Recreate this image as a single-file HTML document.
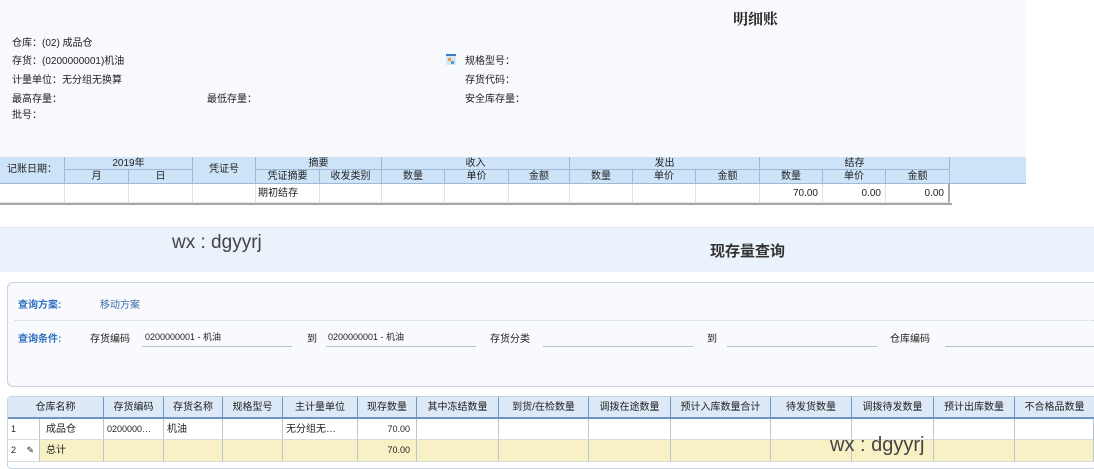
<!DOCTYPE html>
<html><head><meta charset="utf-8"><style>
*{margin:0;padding:0;box-sizing:border-box}
body{width:1094px;height:469px;overflow:hidden;background:#fff;font-family:"Liberation Sans","Noto Sans CJK SC",sans-serif;font-size:10px;color:#222;position:relative}
.a{position:absolute;white-space:nowrap}
.top{position:absolute;left:0;top:0;width:1026px;height:157px;background:#f8f9fd}
.c{position:absolute;border-right:1px solid #9fb8d6;border-bottom:1px solid #9fb8d6;text-align:center;font-size:10px;line-height:13px;overflow:hidden;white-space:nowrap}
.h{background:#cde3f8}
.d{background:#fff;border-right:1px solid #dde3ea;border-bottom:1px solid #dde3ea;text-align:right;padding-right:4px;line-height:19px}
.g{position:absolute;overflow:hidden;white-space:nowrap;font-size:10px;border-right:1px solid #b8c6d6;border-bottom:1px solid #d8dde4;line-height:21px}
.gh{background:#dde9f7;text-align:center;border-right:1px solid #6f95c4;border-bottom:2px solid #6f95c4}
.r1{background:#fff}
.r2{background:#f8f1c6}
.ul{position:absolute;height:1px;background:#b8c0ca}
</style></head><body>
<div class="top"></div>
<div class="a" style="left:733px;top:8px;font-size:15px;font-weight:bold;font-family:'Noto Serif CJK SC',serif">明细账</div>
<div class="a" style="left:12px;top:34px">仓库：(02) 成品仓</div>
<div class="a" style="left:12px;top:52px">存货：(0200000001)机油</div>
<div class="a" style="left:12px;top:71px">计量单位：无分组无换算</div>
<div class="a" style="left:12px;top:90px">最高存量：</div>
<div class="a" style="left:207px;top:90px">最低存量：</div>
<div class="a" style="left:12px;top:106px">批号：</div>
<div class="a" style="left:446px;top:54px;width:10px;height:11px;background:#d9e6f6;border-top:2px solid #3a78c8"><div style="position:absolute;left:2px;top:2px;width:3px;height:3px;background:#e8a040"></div><div style="position:absolute;left:5px;top:5px;width:3px;height:3px;background:#4aa0d0"></div></div>
<div class="a" style="left:465px;top:52px">规格型号：</div>
<div class="a" style="left:465px;top:71px">存货代码：</div>
<div class="a" style="left:465px;top:90px">安全库存量：</div>

<!-- table 1 header -->
<div class="c h" style="left:0;top:157px;width:65px;height:27px;line-height:26px">记账日期：</div>
<div class="c h" style="left:65px;top:157px;width:128px;height:13px">2019年</div>
<div class="c h" style="left:65px;top:170px;width:64px;height:14px">月</div>
<div class="c h" style="left:129px;top:170px;width:64px;height:14px">日</div>
<div class="c h" style="left:193px;top:157px;width:63px;height:27px;line-height:26px">凭证号</div>
<div class="c h" style="left:256px;top:157px;width:126px;height:13px">摘要</div>
<div class="c h" style="left:256px;top:170px;width:64px;height:14px">凭证摘要</div>
<div class="c h" style="left:320px;top:170px;width:62px;height:14px">收发类别</div>
<div class="c h" style="left:382px;top:157px;width:188px;height:13px">收入</div>
<div class="c h" style="left:382px;top:170px;width:63px;height:14px">数量</div>
<div class="c h" style="left:445px;top:170px;width:64px;height:14px">单价</div>
<div class="c h" style="left:509px;top:170px;width:61px;height:14px">金额</div>
<div class="c h" style="left:570px;top:157px;width:190px;height:13px">发出</div>
<div class="c h" style="left:570px;top:170px;width:63px;height:14px">数量</div>
<div class="c h" style="left:633px;top:170px;width:63px;height:14px">单价</div>
<div class="c h" style="left:696px;top:170px;width:64px;height:14px">金额</div>
<div class="c h" style="left:760px;top:157px;width:190px;height:13px">结存</div>
<div class="c h" style="left:760px;top:170px;width:63px;height:14px">数量</div>
<div class="c h" style="left:823px;top:170px;width:63px;height:14px">单价</div>
<div class="c h" style="left:886px;top:170px;width:64px;height:14px">金额</div>
<div class="c h" style="left:950px;top:157px;width:76px;height:27px;border-right:none"></div>
<!-- data row -->
<div class="c d" style="left:0;top:184px;width:65px;height:19px"></div>
<div class="c d" style="left:65px;top:184px;width:64px;height:19px"></div>
<div class="c d" style="left:129px;top:184px;width:64px;height:19px"></div>
<div class="c d" style="left:193px;top:184px;width:63px;height:19px"></div>
<div class="c d" style="left:256px;top:184px;width:64px;height:19px;text-align:left;padding-left:2px">期初结存</div>
<div class="c d" style="left:320px;top:184px;width:62px;height:19px"></div>
<div class="c d" style="left:382px;top:184px;width:63px;height:19px"></div>
<div class="c d" style="left:445px;top:184px;width:64px;height:19px"></div>
<div class="c d" style="left:509px;top:184px;width:61px;height:19px"></div>
<div class="c d" style="left:570px;top:184px;width:63px;height:19px"></div>
<div class="c d" style="left:633px;top:184px;width:63px;height:19px"></div>
<div class="c d" style="left:696px;top:184px;width:64px;height:19px"></div>
<div class="c d" style="left:760px;top:184px;width:63px;height:19px">70.00</div>
<div class="c d" style="left:823px;top:184px;width:63px;height:19px">0.00</div>
<div class="c d" style="left:886px;top:184px;width:64px;height:19px;border-right:2px solid #a8a8a8">0.00</div>
<div class="a" style="left:0;top:203px;width:952px;height:2px;background:#a8a8a8"></div>

<!-- band -->
<div class="a" style="left:0;top:227px;width:1094px;height:45px;background:#eaf2fb;border-top:1px solid #dfe6ee"></div>
<div class="a" style="left:172px;top:232px;font-size:19px;color:#444">wx : dgyyrj</div>
<div class="a" style="left:710px;top:240px;font-size:15px;font-weight:bold;color:#333">现存量查询</div>

<!-- query panel -->
<div class="a" style="left:7px;top:282px;width:1100px;height:105px;background:#f9fafd;border:1px solid #c8d3de;border-radius:6px"></div>
<div class="a" style="left:18px;top:296px;color:#2d6fc0;font-weight:bold">查询方案:</div>
<div class="a" style="left:100px;top:296px;color:#3b6ea8">移动方案</div>
<div class="a" style="left:15px;top:320px;width:1079px;border-top:1px dotted #c8ced6"></div>
<div class="a" style="left:18px;top:330px;color:#2d6fc0;font-weight:bold">查询条件:</div>
<div class="a" style="left:90px;top:330px">存货编码</div>
<div class="a" style="left:145px;top:330px;font-size:9px">0200000001 - 机油</div>
<div class="ul" style="left:142px;top:346px;width:150px"></div>
<div class="a" style="left:307px;top:330px">到</div>
<div class="a" style="left:328px;top:330px;font-size:9px">0200000001 - 机油</div>
<div class="ul" style="left:326px;top:346px;width:150px"></div>
<div class="a" style="left:490px;top:330px">存货分类</div>
<div class="ul" style="left:543px;top:346px;width:150px"></div>
<div class="a" style="left:707px;top:330px">到</div>
<div class="ul" style="left:727px;top:346px;width:150px"></div>
<div class="a" style="left:890px;top:330px">仓库编码</div>
<div class="ul" style="left:945px;top:346px;width:149px"></div>

<!-- grid -->
<div class="a" style="left:7px;top:396px;width:1090px;height:73px;border:1px solid #c8d3de;border-radius:4px"></div>
<div class="g gh" style="left:8px;top:397px;width:96px;height:22px">仓库名称</div>
<div class="g gh" style="left:104px;top:397px;width:60px;height:22px">存货编码</div>
<div class="g gh" style="left:164px;top:397px;width:59px;height:22px">存货名称</div>
<div class="g gh" style="left:223px;top:397px;width:60px;height:22px">规格型号</div>
<div class="g gh" style="left:283px;top:397px;width:75px;height:22px">主计量单位</div>
<div class="g gh" style="left:358px;top:397px;width:59px;height:22px">现存数量</div>
<div class="g gh" style="left:417px;top:397px;width:82px;height:22px">其中冻结数量</div>
<div class="g gh" style="left:499px;top:397px;width:90px;height:22px">到货/在检数量</div>
<div class="g gh" style="left:589px;top:397px;width:82px;height:22px">调拨在途数量</div>
<div class="g gh" style="left:671px;top:397px;width:100px;height:22px">预计入库数量合计</div>
<div class="g gh" style="left:771px;top:397px;width:81px;height:22px">待发货数量</div>
<div class="g gh" style="left:852px;top:397px;width:82px;height:22px">调拨待发数量</div>
<div class="g gh" style="left:934px;top:397px;width:81px;height:22px">预计出库数量</div>
<div class="g gh" style="left:1015px;top:397px;width:79px;height:22px;border-right:none">不合格品数量</div>

<div class="g r1" style="left:8px;top:419px;width:32px;height:21px;padding-left:3px;font-size:9px">1</div>
<div class="g r1" style="left:40px;top:419px;width:64px;height:21px;padding-left:6px">成品仓</div>
<div class="g r1" style="left:104px;top:419px;width:60px;height:21px;padding-left:3px;font-size:9px">0200000…</div>
<div class="g r1" style="left:164px;top:419px;width:59px;height:21px;padding-left:3px">机油</div>
<div class="g r1" style="left:223px;top:419px;width:60px;height:21px"></div>
<div class="g r1" style="left:283px;top:419px;width:75px;height:21px;padding-left:3px">无分组无…</div>
<div class="g r1" style="left:358px;top:419px;width:59px;height:21px;text-align:right;padding-right:6px;font-size:9px">70.00</div>
<div class="g r1" style="left:417px;top:419px;width:82px;height:21px"></div>
<div class="g r1" style="left:499px;top:419px;width:90px;height:21px"></div>
<div class="g r1" style="left:589px;top:419px;width:82px;height:21px"></div>
<div class="g r1" style="left:671px;top:419px;width:100px;height:21px"></div>
<div class="g r1" style="left:771px;top:419px;width:81px;height:21px"></div>
<div class="g r1" style="left:852px;top:419px;width:82px;height:21px"></div>
<div class="g r1" style="left:934px;top:419px;width:81px;height:21px"></div>
<div class="g r1" style="left:1015px;top:419px;width:79px;height:21px"></div>

<div class="g r1" style="left:8px;top:440px;width:32px;height:22px;padding-left:3px;font-size:9px">2 <span style="margin-left:8px">✎</span></div>
<div class="g r2" style="left:40px;top:440px;width:64px;height:22px;padding-left:6px">总计</div>
<div class="g r2" style="left:104px;top:440px;width:60px;height:22px"></div>
<div class="g r2" style="left:164px;top:440px;width:59px;height:22px"></div>
<div class="g r2" style="left:223px;top:440px;width:60px;height:22px"></div>
<div class="g r2" style="left:283px;top:440px;width:75px;height:22px"></div>
<div class="g r2" style="left:358px;top:440px;width:59px;height:22px;text-align:right;padding-right:6px;font-size:9px">70.00</div>
<div class="g r2" style="left:417px;top:440px;width:82px;height:22px"></div>
<div class="g r2" style="left:499px;top:440px;width:90px;height:22px"></div>
<div class="g r2" style="left:589px;top:440px;width:82px;height:22px"></div>
<div class="g r2" style="left:671px;top:440px;width:100px;height:22px"></div>
<div class="g r2" style="left:771px;top:440px;width:81px;height:22px"></div>
<div class="g r2" style="left:852px;top:440px;width:82px;height:22px"></div>
<div class="g r2" style="left:934px;top:440px;width:81px;height:22px"></div>
<div class="g r2" style="left:1015px;top:440px;width:79px;height:22px"></div>
<div class="a" style="left:830px;top:434px;font-size:20px;color:#444">wx : dgyyrj</div>
</body></html>
